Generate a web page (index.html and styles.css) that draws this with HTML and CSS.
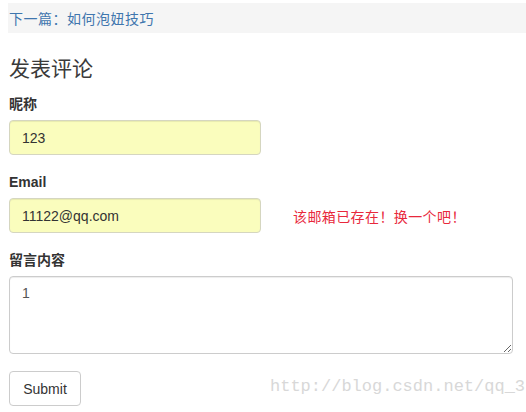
FILE: index.html
```html
<!DOCTYPE html>
<html>
<head>
<meta charset="utf-8">
<link rel="stylesheet" href="styles.css">
</head>
<body>
<div class="page">
  <div class="pager"><a class="next" href="#">下一篇：如何泡妞技巧</a></div>
  <h3 class="title">发表评论</h3>
  <form class="form">
    <div class="group">
      <label class="label">昵称</label>
      <div class="row"><input class="field auto" type="text" value="123"></div>
    </div>
    <div class="group">
      <label class="label">Email</label>
      <div class="row">
        <input class="field auto" type="text" value="11122@qq.com">
        <span class="error">该邮箱已存在！换一个吧！</span>
      </div>
    </div>
    <div class="group">
      <label class="label">留言内容</label>
      <textarea class="area">1</textarea>
    </div>
    <button class="btn" type="button">Submit</button>
  </form>
  <div class="watermark">http://blog.csdn.net/qq_3</div>
</div>
</body>
</html>
```
FILE: styles.css
```css
html, body {
  margin: 0;
  padding: 0;
  background: #fff;
}
body {
  font-family: "Liberation Sans", Arial, "Noto Sans CJK SC", sans-serif;
  color: #333;
  font-size: 14px;
  overflow: hidden;
}
.page {
  position: relative;
  height: 412px;
  padding-top: 3px;
  box-sizing: border-box;
}
.pager {
  margin-left: 8px;
  height: 30px;
  background: #f5f5f5;
  display: flex;
  align-items: center;
  padding-left: 1px;
}
.next {
  color: #3f76ae;
  text-decoration: none;
  font-size: 14px;
  letter-spacing: 0.5px;
  font-family: "Noto Sans CJK SC", sans-serif;
}
.title {
  margin: 20px 0 0 9px;
  font-size: 21px;
  font-weight: normal;
  line-height: 28px;
  font-family: "Noto Sans CJK SC", sans-serif;
  color: #3a3a3a;
}
.form {
  margin: 14px 0 0 9px;
  width: 504px;
}
.group {
  margin-bottom: 18px;
}
.label {
  display: block;
  font-weight: bold;
  font-size: 14px;
  line-height: 18px;
  margin-bottom: 7px;
  font-family: "Liberation Sans", Arial, "Noto Sans CJK SC", sans-serif;
}
.row {
  display: flex;
  align-items: center;
}
.field {
  width: 252px;
  height: 35px;
  box-sizing: border-box;
  border: 1px solid #ccc;
  border-radius: 4px;
  padding: 6px 12px;
  font-size: 14px;
  font-family: "Liberation Sans", Arial, sans-serif;
  color: #333;
  box-shadow: inset 0 1px 1px rgba(0,0,0,.075);
}
.auto {
  background: #fafdbd;
  border-color: #d5d6c0;
}
.error {
  margin-left: 32px;
  color: #e8283c;
  font-size: 14px;
  letter-spacing: 0.4px;
  font-family: "Noto Sans CJK SC", sans-serif;
}
.area {
  display: block;
  width: 504px;
  height: 78px;
  box-sizing: border-box;
  border: 1px solid #ccc;
  border-radius: 4px;
  padding: 6px 12px;
  font-family: "Liberation Sans", Arial, sans-serif;
  font-size: 14px;
  line-height: 20px;
  color: #555;
  resize: vertical;
  box-shadow: inset 0 1px 1px rgba(0,0,0,.075);
}
.btn {
  margin-top: -1px;
  height: 35px;
  padding: 0 13px;
  min-width: 72px;
  background: #fff;
  border: 1px solid #ccc;
  border-radius: 4px;
  font-size: 14px;
  font-family: "Liberation Sans", Arial, sans-serif;
  color: #333;
}
.watermark {
  position: absolute;
  left: 270px;
  top: 377px;
  font-family: "Liberation Mono", monospace;
  font-size: 17px;
  color: #d8d8d8;
  white-space: nowrap;
}
```
